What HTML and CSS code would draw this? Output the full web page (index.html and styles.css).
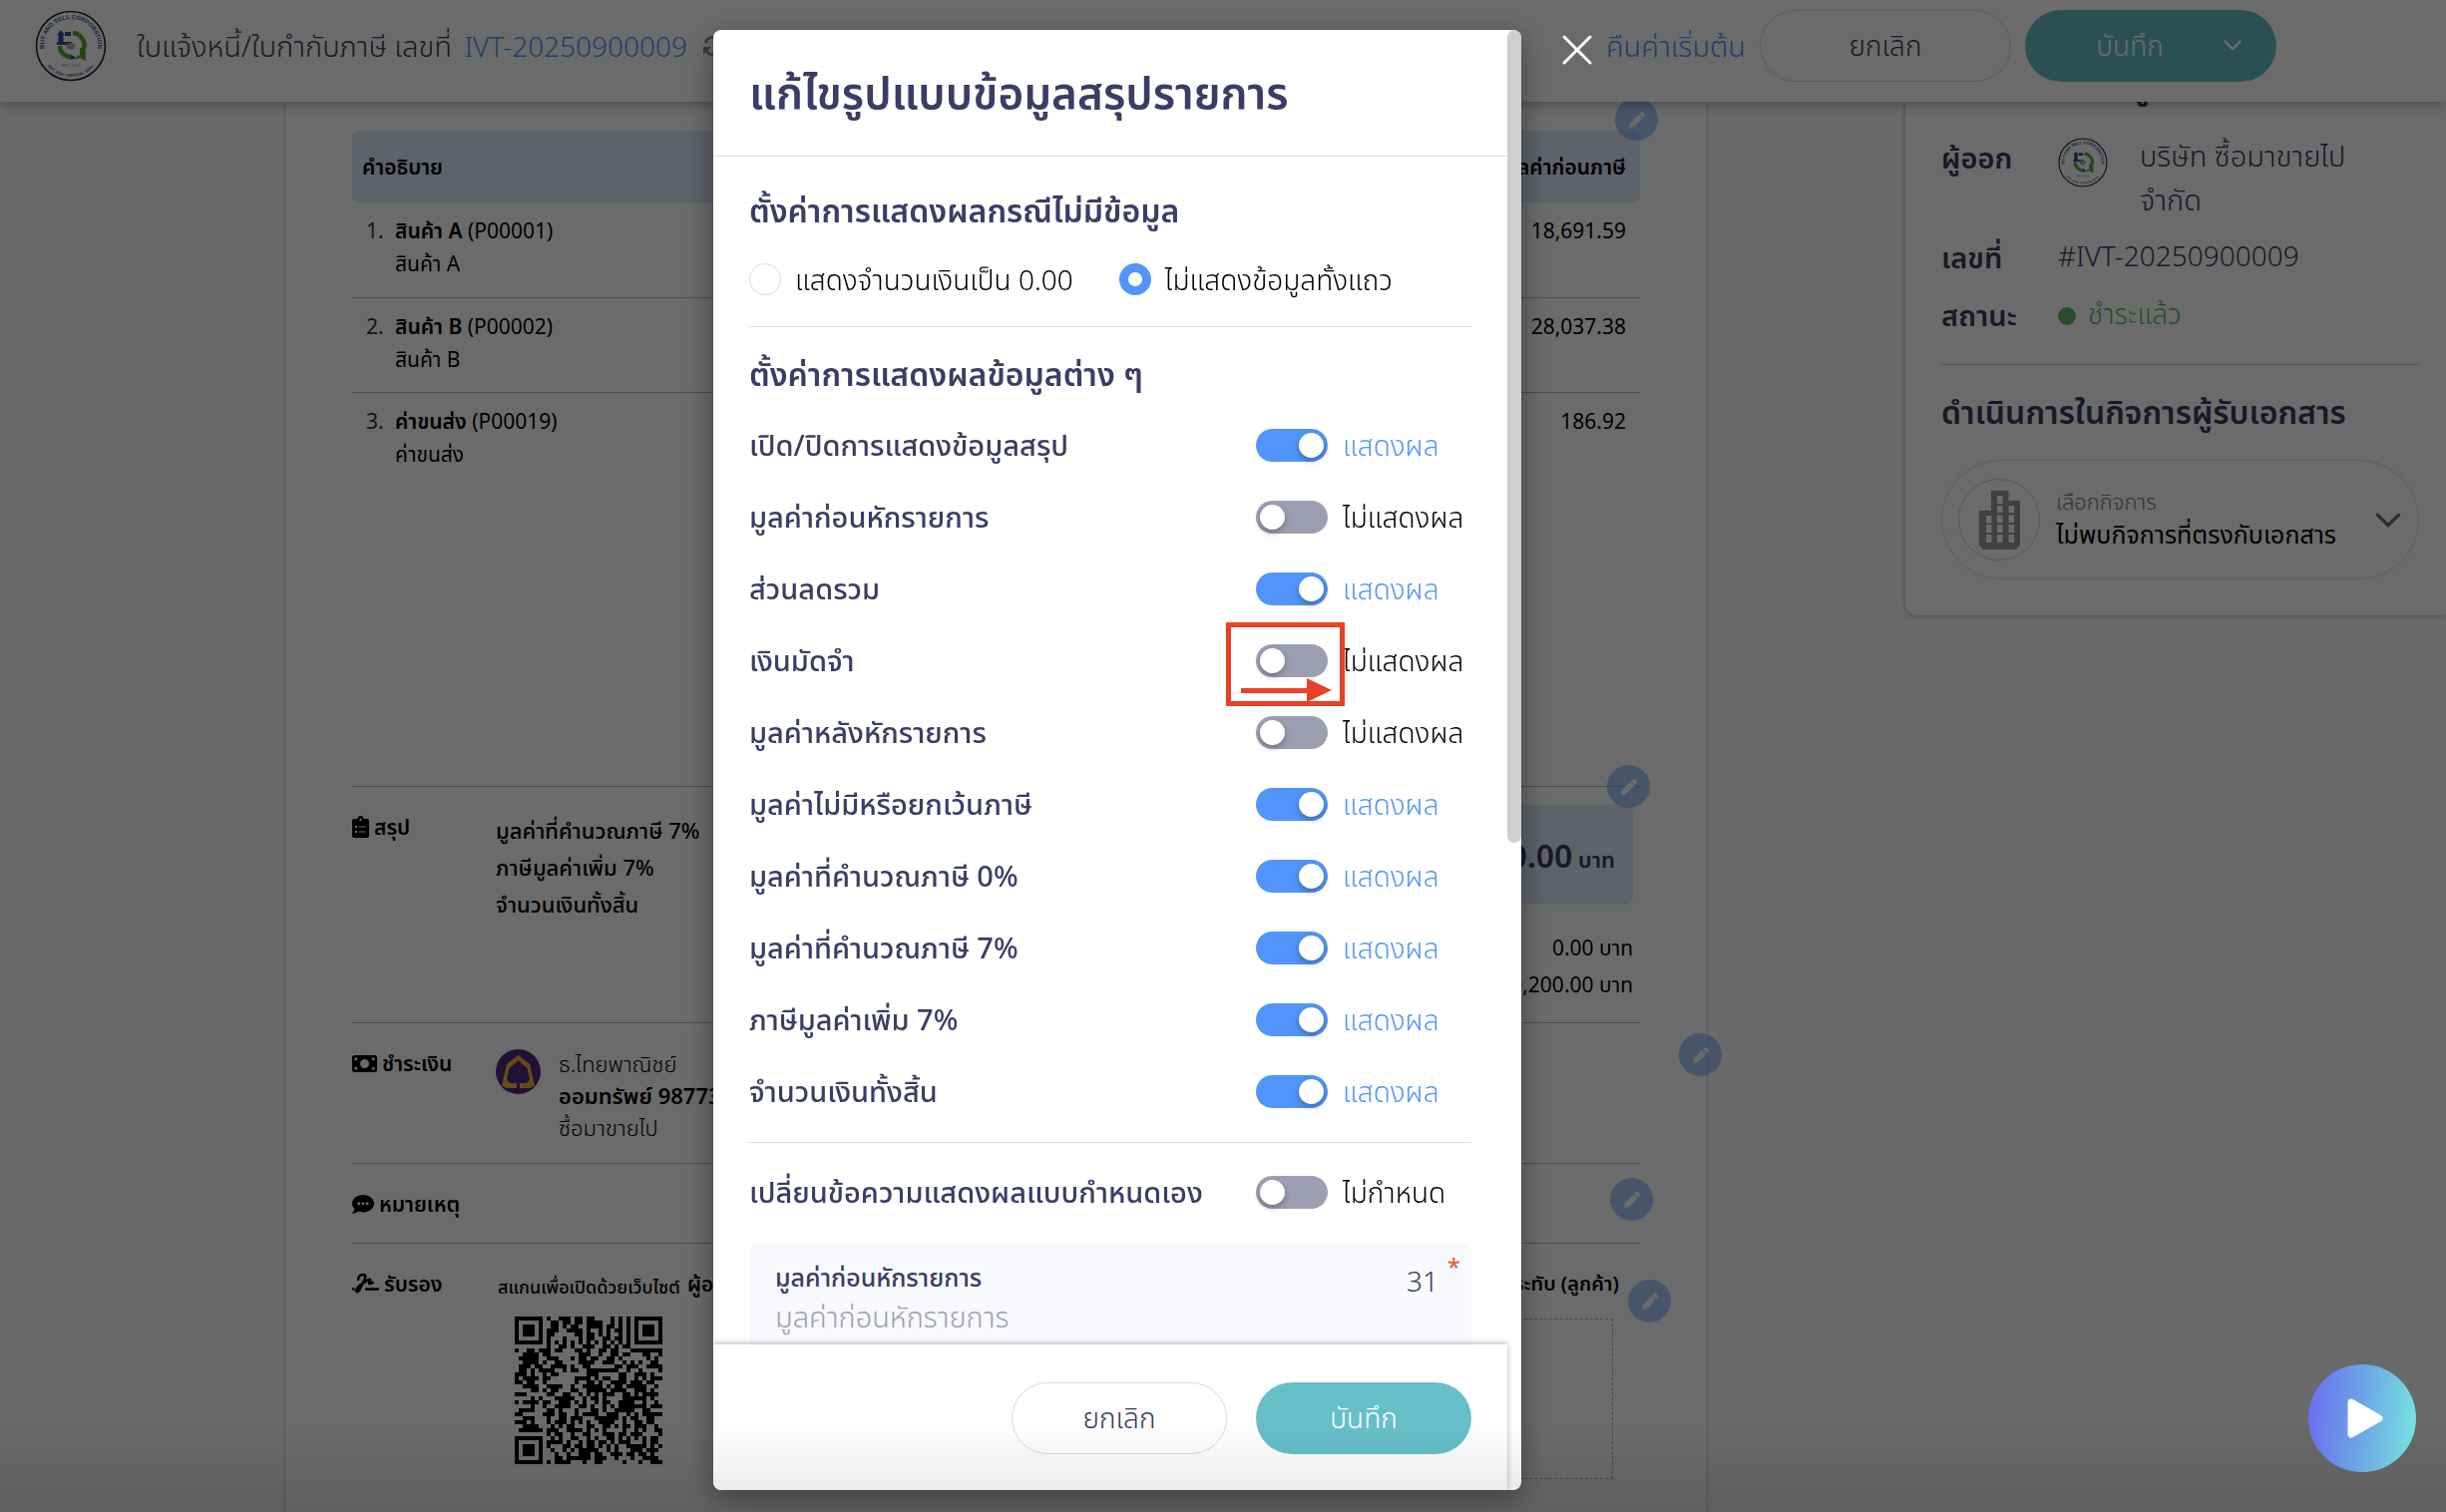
FILE: index.html
```
<!DOCTYPE html>
<html lang="th">
<head>
<meta charset="utf-8">
<meta name="viewport" content="width=device-width, initial-scale=1">
<title>ใบแจ้งหนี้/ใบกำกับภาษี IVT-20250900009</title>
<link rel="stylesheet" href="styles.css">
</head>
<body>
<svg class="defs" aria-hidden="true">
  <symbol id="pencil" viewBox="0 0 24 24"><path d="M16 3.2a2.6 2.6 0 0 1 3.700 0l1.100 1.100a2.600 2.600 0 0 1 0 3.700l-1.500 1.500-4.800-4.800zM13.600 5.600l4.800 4.800L8.500 20.300 3 21.500q-.6 0-.5-.6L3.700 15.500z"/></symbol>
  <symbol id="chevron" viewBox="0 0 24 24"><path d="M3 8l9 9 9-9" fill="none" stroke="currentColor" stroke-width="3" stroke-linecap="round" stroke-linejoin="round"/></symbol>
  <symbol id="seal" viewBox="0 0 72 72">
    <circle cx="36" cy="36" r="34.500" fill="#fff" stroke="#222" stroke-width="1.600"/>
    <path id="seal-top" d="M12.600 49.500a27 27 0 1 1 46.800 0" fill="none"/>
    <path id="seal-bottom" d="M5 36a31 31 0 0 0 62 0" fill="none"/>
    <text class="seal-text" font-size="6"><textPath href="#seal-top" startOffset="50%" text-anchor="middle">BUY AND SELL CORPORATION</textPath></text>
    <text class="seal-text" font-size="4"><textPath href="#seal-bottom" startOffset="50%" text-anchor="middle">EST. 2023 • OFFICIAL SEAL</textPath></text>
    <path d="M38 23a12.500 12.500 0 0 1 11 16" fill="none" stroke="#5aa53a" stroke-width="4.500"/>
    <path d="M25 36a11 11 0 0 0 13 11" fill="none" stroke="#5aa53a" stroke-width="4.500"/>
    <path d="M43 45l3 2 5-7v11l-6-3-4 2zM45 38h5v10h-5z" fill="#5aa53a"/>
    <path d="M22 25l4-5 4 5h-1.500v7H37v3H22v-3h1.500v-7zM30 22h6v4h-6zM36 45l6 3-6 2z" fill="#2c4f9e"/>
    <path d="M31 35q5-4 10 0l-2 4q-4 2-7-1z" fill="#aaa"/>
    <text x="36" y="57" text-anchor="middle" class="seal-est" font-size="4">EST. 2023</text>
  </symbol>
</svg>

<header class="topbar">
  <svg class="topbar-logo"><use href="#seal"/></svg>
  <h1 class="topbar-title">ใบแจ้งหนี้/ใบกำกับภาษี เลขที่ <a href="#document">IVT-20250900009</a></h1>
  <svg class="topbar-refresh" viewBox="0 0 24 24"><path d="M4 9a8.500 8.500 0 0 1 15-2M20 15a8.500 8.500 0 0 1-15 2" fill="none" stroke="currentColor" stroke-width="2.600"/><path d="M2 13h8l-8 8zM22 11h-8l8-8z" fill="currentColor"/></svg>
  <div class="topbar-actions">
    <a class="link" href="#reset">คืนค่าเริ่มต้น</a>
    <button class="btn btn-outline btn-wide" type="button">ยกเลิก</button>
    <button class="btn btn-primary btn-wide" type="button"><span class="btn-text">บันทึก</span><svg class="btn-chevron"><use href="#chevron"/></svg></button>
  </div>
</header>

<main class="workspace">
  <article class="sheet" id="document">
    <div class="items-area">
      <button class="edit edit-items" type="button" aria-label="แก้ไขรายการ"><svg><use href="#pencil"/></svg></button>
      <table class="items">
        <thead><tr><th>คำอธิบาย</th><th class="num">มูลค่าก่อนภาษี</th></tr></thead>
        <tbody>
          <tr><td><div class="item"><span class="item-no">1.</span><div><b>สินค้า A</b> (P00001)<br>สินค้า A</div></div></td><td class="num">18,691.59</td></tr>
          <tr><td><div class="item"><span class="item-no">2.</span><div><b>สินค้า B</b> (P00002)<br>สินค้า B</div></div></td><td class="num">28,037.38</td></tr>
          <tr><td><div class="item"><span class="item-no">3.</span><div><b>ค่าขนส่ง</b> (P00019)<br>ค่าขนส่ง</div></div></td><td class="num">186.92</td></tr>
        </tbody>
      </table>
    </div>

    <section class="part part-summary">
      <button class="edit edit-summary" type="button" aria-label="แก้ไขสรุป"><svg><use href="#pencil"/></svg></button>
      <h2 class="part-name"><svg class="ico-clip" viewBox="0 0 17 22"><path fill-rule="evenodd" d="M2 3h3.500a3 3 0 0 1 6 0H15a2 2 0 0 1 2 2v15a2 2 0 0 1-2 2H2a2 2 0 0 1-2-2V5a2 2 0 0 1 2-2zM8.500 2.500a1.200 1.200 0 1 0 0 2.400 1.200 1.200 0 0 0 0-2.400zM3 10v2h2v-2zM6.500 10.500v1h7v-1zM3 15v2h2v-2zM6.500 15.500v1h7v-1z"/></svg>สรุป</h2>
      <ul class="sum-names"><li>มูลค่าที่คำนวณภาษี 7%</li><li>ภาษีมูลค่าเพิ่ม 7%</li><li>จำนวนเงินทั้งสิ้น</li></ul>
      <div class="sum-values">
        <p class="sum-total"><strong>50,200.00</strong> บาท</p>
        <p>0.00 บาท</p>
        <p>50,200.00 บาท</p>
      </div>
    </section>

    <section class="part part-payment">
      <button class="edit edit-payment" type="button" aria-label="แก้ไขการชำระเงิน"><svg><use href="#pencil"/></svg></button>
      <h2 class="part-name"><svg class="ico-cash" viewBox="0 0 25 17"><path fill-rule="evenodd" d="M2.500 0h20A2.500 2.500 0 0 1 25 2.500v12a2.500 2.500 0 0 1-2.500 2.500h-20A2.500 2.500 0 0 1 0 14.500v-12A2.500 2.500 0 0 1 2.500 0zM2.500 2.500v3a3 3 0 0 0 3-3zM22.500 2.500v3a3 3 0 0 1-3-3zM2.500 14.500v-3a3 3 0 0 1 3 3zM22.500 14.500v-3a3 3 0 0 0-3 3zM12.500 4a4.500 4.500 0 1 0 0 9 4.500 4.500 0 0 0 0-9z"/></svg>ชำระเงิน</h2>
      <div class="bank">
        <svg class="bank-logo" viewBox="0 0 45 45"><circle cx="22.500" cy="22.500" r="22.500" fill="#4e2a84"/><path fill-rule="evenodd" fill="#fbb034" d="M22.500 6L34 15l5 21.500-5 2.500H24v-5h7q4-3 2-8l-1.500-7q-5-4-9-8-4 4-9 8L12 26q-2 5 2 8h7v5H11l-5-2.500L11 15z"/></svg>
        <p>ธ.ไทยพาณิชย์<br><b>ออมทรัพย์ 9877312345</b><br>ซื้อมาขายไป</p>
      </div>
    </section>

    <section class="part part-note">
      <button class="edit edit-note" type="button" aria-label="แก้ไขหมายเหตุ"><svg><use href="#pencil"/></svg></button>
      <h2 class="part-name"><svg class="ico-note" viewBox="0 0 22 19"><path fill-rule="evenodd" d="M11 0c6 0 11 3.800 11 8.700s-5 8.700-11 8.700q-2.500 0-4.600-.8Q4 18.500.5 18.800q-.8-.2-.2-.9 1.700-1.700 2.200-3.700Q0 11.900 0 8.700C0 3.800 5 0 11 0zM5.500 7.500v2.600h2.600V7.500zM9.700 7.500v2.600h2.600V7.500zM13.900 7.500v2.600h2.600V7.500z"/></svg>หมายเหตุ</h2>
    </section>

    <section class="part part-sign">
      <button class="edit edit-sign" type="button" aria-label="แก้ไขการรับรอง"><svg><use href="#pencil"/></svg></button>
      <h2 class="part-name"><svg class="ico-sign" viewBox="0 0 27 20"><path d="M0 15.500h2.500M13 15.500h14M6 7q0-6 5-6 4 0 1 6l-4 8q-2 4-3.500 3-1.500-2 2.500-5.500t7-5q5-3 4-.5-1.500 3-.5 3t4-1.500" fill="none" stroke="currentColor" stroke-width="2.600"/></svg>รับรอง</h2>
      <div class="scan">
        <p>สแกนเพื่อเปิดด้วยเว็บไซต์</p>
        <svg class="qr" id="qr" viewBox="0 0 37 37" shape-rendering="crispEdges"></svg>
      </div>
      <p class="sign-issuer">ผู้ออก</p>
      <div class="stamp"><p>ตราประทับ (ลูกค้า)</p><div class="stamp-box"></div></div>
    </section>
  </article>

  <aside class="side">
    <h2 class="side-top">รายละเอียดข้อมูล</h2>
    <dl class="facts">
      <dt>ผู้ออก</dt><dd class="issuer"><svg><use href="#seal"/></svg><span>บริษัท ซื้อมาขายไป จำกัด</span></dd>
      <dt>เลขที่</dt><dd>#IVT-20250900009</dd>
      <dt>สถานะ</dt><dd class="paid">ชำระแล้ว</dd>
    </dl>
    <h2 class="side-title">ดำเนินการในกิจการผู้รับเอกสาร</h2>
    <button class="picker" type="button">
      <span class="picker-icon"><svg viewBox="0 0 41 59"><path fill-rule="evenodd" d="M12 0h17.500v10H41v45l-4 4H4l-4-4V20h12zM18 5v8h5.500V5zM18 15v7h5.500v-7zM18 24.500v7.500h5.500v-7.500zM18 34v8h5.500v-8zM18 44v8h5.500v-8zM29.500 15v7H35v-7zM29.500 24.500v7.500H35v-7.500zM29.500 34v8H35v-8zM29.500 44v8H35v-8zM7 25v7.500h5.500V25zM7 34v8h5.500v-8zM7 44v8h5.500v-8z"/></svg></span>
      <span class="picker-text"><small>เลือกกิจการ</small>ไม่พบกิจการที่ตรงกับเอกสาร</span>
      <svg class="picker-chevron"><use href="#chevron"/></svg>
    </button>
  </aside>
</main>

<div class="backdrop">
  <div class="modal" role="dialog" aria-modal="true" aria-labelledby="modal-title">
    <span class="scroll-thumb"></span>
    <header class="modal-head"><h2 id="modal-title">แก้ไขรูปแบบข้อมูลสรุปรายการ</h2></header>
    <div class="modal-body">
      <h3>ตั้งค่าการแสดงผลกรณีไม่มีข้อมูล</h3>
      <div class="radios">
        <label><input type="radio" name="empty">แสดงจำนวนเงินเป็น 0.00</label>
        <label><input type="radio" name="empty" checked>ไม่แสดงข้อมูลทั้งแถว</label>
      </div>
      <hr>
      <h3>ตั้งค่าการแสดงผลข้อมูลต่าง ๆ</h3>
      <div class="switches">
        <label class="switch"><span class="switch-name">เปิด/ปิดการแสดงข้อมูลสรุป</span><input type="checkbox" checked><span class="switch-state">แสดงผล</span></label>
        <label class="switch"><span class="switch-name">มูลค่าก่อนหักรายการ</span><input type="checkbox"><span class="switch-state">ไม่แสดงผล</span></label>
        <label class="switch"><span class="switch-name">ส่วนลดรวม</span><input type="checkbox" checked><span class="switch-state">แสดงผล</span></label>
        <label class="switch"><span class="switch-name">เงินมัดจำ</span><input type="checkbox"><span class="switch-state">ไม่แสดงผล</span>
          <svg class="callout" viewBox="0 0 119 84"><path d="M2.500 2.500h114v79h-114z" fill="none" stroke="#ea4025" stroke-width="5"/><path d="M15 66h66V56l25 12-25 12v-9H15z" fill="#ea4025"/></svg></label>
        <label class="switch"><span class="switch-name">มูลค่าหลังหักรายการ</span><input type="checkbox"><span class="switch-state">ไม่แสดงผล</span></label>
        <label class="switch"><span class="switch-name">มูลค่าไม่มีหรือยกเว้นภาษี</span><input type="checkbox" checked><span class="switch-state">แสดงผล</span></label>
        <label class="switch"><span class="switch-name">มูลค่าที่คำนวณภาษี 0%</span><input type="checkbox" checked><span class="switch-state">แสดงผล</span></label>
        <label class="switch"><span class="switch-name">มูลค่าที่คำนวณภาษี 7%</span><input type="checkbox" checked><span class="switch-state">แสดงผล</span></label>
        <label class="switch"><span class="switch-name">ภาษีมูลค่าเพิ่ม 7%</span><input type="checkbox" checked><span class="switch-state">แสดงผล</span></label>
        <label class="switch"><span class="switch-name">จำนวนเงินทั้งสิ้น</span><input type="checkbox" checked><span class="switch-state">แสดงผล</span></label>
      </div>
      <hr>
      <label class="switch"><span class="switch-name">เปลี่ยนข้อความแสดงผลแบบกำหนดเอง</span><input type="checkbox"><span class="switch-state">ไม่กำหนด</span></label>
      <div class="field">
        <label for="before">มูลค่าก่อนหักรายการ</label>
        <input id="before" type="text" placeholder="มูลค่าก่อนหักรายการ">
        <span class="field-count">31</span><span class="field-star">*</span>
      </div>
    </div>
    <footer class="modal-foot">
      <button class="btn btn-outline" type="button">ยกเลิก</button>
      <button class="btn btn-primary" type="button">บันทึก</button>
    </footer>
  </div>
  <button class="close" type="button" aria-label="ปิด"><svg viewBox="0 0 30 30"><path d="M2 2l26 26M28 2L2 28" stroke="#fff" stroke-width="3" stroke-linecap="round"/></svg></button>
</div>
<div class="fade"></div>
<button class="play" type="button" aria-label="เล่นวิดีโอ"><svg viewBox="0 0 36 40"><path d="M4 4l28 16L4 36z" fill="#fff" stroke="#fff" stroke-width="7" stroke-linejoin="round"/></svg></button>
<script src="qr.js"></script>
</body>
</html>
```
FILE: styles.css
```
* { box-sizing: border-box; }
body, h1, h2, h3, p, dl, dd, ul { margin: 0; padding: 0; }
body {
  height: 100vh;
  overflow: hidden;
  background: #fafafa;
  color: #000;
  font: 21px/32px "Noto Sans", "Noto Sans Thai", sans-serif;
}
button, input { font: inherit; color: inherit; }
a { text-decoration: none; color: #5195fa; }
b { font-weight: 600; }
.defs { position: absolute; width: 0; height: 0; }
.seal-text { font-family: "Liberation Sans", sans-serif; font-weight: 700; fill: #2c4f9e; }
.seal-est { font-family: "Liberation Sans", sans-serif; fill: #888; }

/* top bar */
.topbar {
  position: relative;
  z-index: 1;
  display: flex;
  align-items: center;
  height: 102px;
  padding: 0 170px 10px 35px;
  background: #fff;
  box-shadow: 0 2px 12px rgba(0, 0, 0, .35);
  color: #3b3960;
}
.topbar-logo { width: 72px; height: 72px; }
.topbar-title { margin-left: 30px; font-size: 29px; font-weight: 300; line-height: 46px; white-space: nowrap; }
.topbar-title a { margin-left: 5px; font-size: 28px; }
.topbar-refresh { width: 24px; height: 24px; margin-left: 14px; color: #8a8a99; }
.topbar-actions { display: flex; align-items: center; gap: 14px; margin-left: auto; }
.link { font-size: 29px; font-weight: 300; }
.btn {
  width: 216px;
  height: 72px;
  padding: 0 0 3px;
  border: 0;
  border-radius: 36px;
  font-size: 28px;
  font-weight: 300;
}
.btn-wide { display: flex; align-items: center; justify-content: center; width: 252px; }
.btn-outline { border: 1px solid #d9d9e3; background: #fff; color: #3b3960; }
.btn-primary { background: #67bfc9; color: #fff; }
.btn-text { flex: 1; padding-left: 12px; }
.btn-chevron { width: 20px; height: 20px; margin-right: 34px; }

/* workspace */
.workspace { display: grid; grid-template-columns: 1427fr 542fr; gap: 198px; padding-left: 285px; align-items: start; }
.sheet {
  min-height: calc(100vh - 102px);
  padding: 29px 67px 0;
  border: solid #d4d4d4;
  border-width: 0 1px;
  background: #fff;
}
.items-area { position: relative; min-height: 657px; }
.items { width: 100%; border-collapse: collapse; }
.items th { height: 72px; padding: 0 10px; background: #dfe9f9; text-align: left; font-weight: 600; }
.items th:first-child { border-radius: 8px 0 0 8px; }
.items th:last-child { border-radius: 0 8px 8px 0; }
.items td { height: 95px; padding: 12px 14px 16px; vertical-align: top; line-height: 33px; }
.items tbody tr:not(:last-child) td { border-bottom: 1px solid #b8b8b8; }
.items .num { text-align: right; padding-right: 14px; }
.item { display: flex; gap: 12px; }
.item-no { width: 17px; color: #333; }
.edit {
  position: absolute;
  display: grid;
  place-items: center;
  width: 43px;
  height: 43px;
  padding: 0;
  border: 0;
  border-radius: 50%;
  background: rgba(81, 149, 250, .5);
}
.edit svg { width: 20px; height: 20px; fill: #fff; }
.edit-items { top: -33px; right: -18px; }
.edit-summary { top: -22px; right: -10px; }
.edit-payment { top: 10px; right: -82px; }
.edit-note { top: 14px; right: -13px; }
.edit-sign { top: 36px; right: -31px; }

.part { position: relative; display: grid; grid-template-columns: 144px 1fr; border-top: 1px solid #b8b8b8; }
.part-name { display: flex; align-items: center; gap: 5px; height: 32px; margin-top: 24px; font-size: 21px; font-weight: 600; }
.part-summary { grid-template-columns: 144px 1fr 1fr; height: 237px; }
.part-payment { height: 141px; }
.part-note { height: 80px; }
.part-sign { grid-template-columns: 141px 180px 1fr 240px; column-gap: 5px; padding-right: 27px; }
.ico-clip { width: 17px; height: 22px; }
.ico-cash { width: 25px; height: 17px; }
.ico-note { width: 22px; height: 19px; }
.ico-sign { width: 27px; height: 20px; }
.sum-names { margin-top: 25px; list-style: none; font-size: 22px; font-weight: 500; line-height: 37px; }
.sum-values { padding: 18px 7px 0 0; text-align: right; line-height: 37px; }
.sum-total { height: 100px; margin-bottom: 25px; padding-right: 18px; border-radius: 8px; background: #dfe9f9; color: #3b3960; font-size: 22px; font-weight: 600; line-height: 102px; }
.sum-total strong { font-size: 32px; font-weight: 600; }
.bank { display: flex; gap: 18px; margin-top: 26px; font-size: 22px; font-weight: 300; }
.bank-logo { width: 45px; height: 45px; }
.bank p { margin-top: -2px; }
.scan { padding-top: 27px; font-size: 18px; font-weight: 500; white-space: nowrap; }
.qr { display: block; width: 148px; height: 148px; margin: 14px 0 0 17px; }
.sign-issuer { margin: 24px 0 0 5px; font-weight: 600; }
.stamp { padding-top: 24px; font-size: 20px; font-weight: 600; text-align: right; white-space: nowrap; }
.stamp p { margin-right: -6px; }
.stamp-box { height: 161px; margin-top: 19px; border: 1px dashed #b0b0b0; }

/* side card */
.side {
  padding: 0 27px 36px 36px;
  border-radius: 0 0 0 12px;
  background: #fff;
  box-shadow: 0 0 6px rgba(0, 0, 0, .3);
  color: #3b3960;
}
.side-top { height: 30px; font-size: 32px; line-height: 48px; margin-top: -39px; margin-bottom: 41px; }
.facts { display: grid; grid-template-columns: 117px 1fr; row-gap: 12px; padding-bottom: 27px; border-bottom: 1px solid #c4c4cc; font-size: 28px; line-height: 44px; }
.facts dt { padding-top: 2px; font-size: 29px; font-weight: 600; }
.facts dd { font-weight: 300; }
.issuer { display: flex; gap: 32px; font-size: 29px; }
.issuer svg { flex: none; width: 50px; height: 50px; margin-top: 4px; }
.issuer span { max-width: 220px; }
.paid { color: #5eb868; }
.paid::before { content: ""; display: inline-block; width: 18px; height: 18px; margin-right: 12px; border-radius: 50%; background: currentColor; vertical-align: -1px; }
.side-title { margin: 23px 0 24px; font-size: 32px; font-weight: 600; line-height: 48px; }
.picker { display: flex; align-items: center; gap: 16px; width: 100%; height: 120px; padding: 0 16px; border: 1px solid #dcdce4; border-radius: 60px; background: #fff; text-align: left; }
.picker-icon { display: grid; place-items: center; flex: none; width: 82px; height: 82px; border: 1px solid #ccc; border-radius: 50%; }
.picker-icon svg { width: 41px; height: 59px; fill: #999; }
.picker-text { flex: 1; padding-bottom: 4px; color: #000; font-size: 25px; line-height: 33px; white-space: nowrap; }
.picker-text small { display: block; color: #77778a; font-size: 22px; font-weight: 300; }
.picker-chevron { width: 28px; height: 28px; color: #707085; }

/* modal */
.backdrop { position: fixed; z-index: 2; inset: 0; display: flex; justify-content: center; align-items: flex-start; padding: 30px 141px 22px 0; background: rgba(0, 0, 0, .58); }
.modal {
  position: relative;
  display: flex;
  flex-direction: column;
  width: 810px;
  height: 100%;
  padding-right: 14px;
  border-radius: 8px;
  overflow: hidden;
  background: #fff;
  box-shadow: 0 8px 30px rgba(0, 0, 0, .4);
  color: #3b3d66;
}
.scroll-thumb { position: absolute; top: 0; right: 0; width: 14px; height: 815px; border-radius: 7px; background: #cfcfcf; }
.modal-head { flex: none; padding: 31px 36px 33px; border-bottom: 1px solid #dcdce8; }
.modal-head h2 { font-size: 44px; font-weight: 600; line-height: 62px; }
.modal-body { flex: 1; min-height: 0; overflow: hidden; padding: 30px 36px 0; }
.modal-body h3 { font-size: 32px; font-weight: 600; line-height: 48px; }
.modal-body hr { height: 1px; margin: 0; border: 0; background: #dcdce8; }
.radios { display: flex; gap: 46px; padding: 23px 0 25px; color: #000; font-size: 28px; font-weight: 300; line-height: 44px; white-space: nowrap; }
.radios label { display: flex; align-items: center; gap: 14px; }
.radios input { appearance: none; width: 32px; height: 32px; margin: 0; border: 1px solid #dcdce8; border-radius: 50%; background: #fff; }
.radios input:checked { border: 9px solid #5195fa; }
.radios + hr { margin-bottom: 23px; }
.switches { padding: 11px 0 15px; }
.switch { position: relative; display: grid; grid-template-columns: 1fr 72px 129px; column-gap: 15px; align-items: center; height: 72px; }
.switch-name { font-size: 29px; font-weight: 500; white-space: nowrap; }
.switch-state { color: #000; font-size: 28px; font-weight: 300; white-space: nowrap; }
.switch input { position: relative; appearance: none; width: 72px; height: 33px; margin: 0; border-radius: 17px; background: #9d9eb2; }
.switch input::before { content: ""; position: absolute; top: 4px; left: 4px; width: 25px; height: 25px; border-radius: 50%; background: #fff; box-shadow: 0 3px 6px rgba(0, 0, 0, .3); }
.switch input:checked { background: #5195fa; }
.switch input:checked::before { left: 43px; }
.switch input:checked + .switch-state { color: #5195fa; }
.callout { position: absolute; top: -2px; right: 127px; width: 119px; height: 84px; }
.modal-body hr + .switch { margin: 13px 0 15px; }
.field { position: relative; height: 118px; padding: 16px 26px; border-radius: 8px; background: #f8f9fd; }
.field label { display: block; font-size: 25px; font-weight: 500; line-height: 36px; }
.field input { width: 100%; height: 42px; padding: 0; border: 0; background: none; font-size: 29px; font-weight: 300; }
.field input::placeholder { color: #9d9eb2; opacity: 1; }
.field-count { position: absolute; top: 22px; right: 33px; font-size: 28px; font-weight: 300; }
.field-star { position: absolute; top: 8px; right: 11px; color: #ea5a2d; font-size: 24px; }
.modal-foot { position: relative; display: flex; justify-content: flex-end; gap: 29px; flex: none; height: 146px; padding: 38px 36px 0; background: #fff; box-shadow: 0 -1px 6px rgba(0, 0, 0, .3); }
.close { flex: none; width: 30px; height: 30px; margin: 5px 0 0 41px; padding: 0; border: 0; background: none; }
.close svg { display: block; }
.fade { position: fixed; z-index: 3; inset: auto 0 0; height: 90px; background: linear-gradient(transparent, rgba(0, 0, 0, .1)); pointer-events: none; }
.play { position: fixed; z-index: 4; right: 30px; bottom: 40px; display: grid; place-items: center; width: 108px; height: 108px; padding: 0 0 0 5px; border: 0; border-radius: 50%; background: linear-gradient(95deg, #6b6bf0, #6ca6e6 50%, #78e6df); }
.play svg { width: 36px; height: 40px; }
```
FILE: qr.js
```
const rows = [
  "#######.#..###.##.##....#.#.#.#######",
  "#.....#..##.##.##.####..#.#.#.#.....#",
  "#.###.#..##.#.##..####.##.#.#.#.###.#",
  "#.###.#.###..####.#..#.#.##.#.#.###.#",
  "#.###.#.##.....##.##.#.#..#.#.#.###.#",
  "#.....#.#...#...#.##..##.##.#.#.....#",
  "#######.#.#.#.#.#.#.#.#.#.#.#.#######",
  "........#..##.#..###..##.#.##........",
  "#..##.###.##...##.#..##.##...########",
  "..####.##.......###..#..##.##...##..#",
  ".#####..###...#.##.##..##.#......#.#.",
  "..####.#..##....####..###..#.#.#..##.",
  ".###.##..####.#..##......##.###..####",
  ".##.#.####..#.##..########..#..#....#",
  "###.#..#.##.......###.....##..###.#..",
  "#.####.##......####.#.##..##..#.#.###",
  "##.##..#.......#..##.#..####.###.##..",
  "..####..####..#..#####.#.##.#####..#.",
  "....##.#.##...##..#####.####..###.#..",
  "###.....##..##..#.#.#.###..##.#.####.",
  "....#.#...#####..#.##.#....######.#..",
  "#.####.##..###.#.#..#.##..####..#..#.",
  "....#..#..####..##.#..#.#.#######.###",
  ".####...##.#...#...##.#..#####..##...",
  "##.....###.##..#.####..###..#.#.#####",
  "..###...#..##.###...######.#.##..##..",
  "###.#...#.###.#.#.#..####..#..##.##..",
  "..####...#.#.##...##..##.#.##.###..#.",
  ".######.###..####.#.#.#....#..#.#..##",
  "........#.##..#..##...###.##.###....#",
  "#######..#.#..##..#.#..##.#.#.#.#.##.",
  "#.....#.####.#..#.##.##.#.###...#.##.",
  "#.###.#.#...##.##.##.#.#.#..#####.#.#",
  "#.###.#..#..#.#.#####..#.#...###.###.",
  "#.###.#...#..#..###.##..###.##.##.#..",
  "#.....#...##.######.###..#...#..####.",
  "#######.#.####...#..##.....#...#..###"
];
let d = "";
rows.forEach((row, y) => {
  for (let x = 0; x < row.length; x++) if (row[x] === "#") d += `M${x} ${y}h1v1h-1z`;
});
const path = document.createElementNS("http://www.w3.org/2000/svg", "path");
path.setAttribute("d", d);
document.getElementById("qr").append(path);
```
